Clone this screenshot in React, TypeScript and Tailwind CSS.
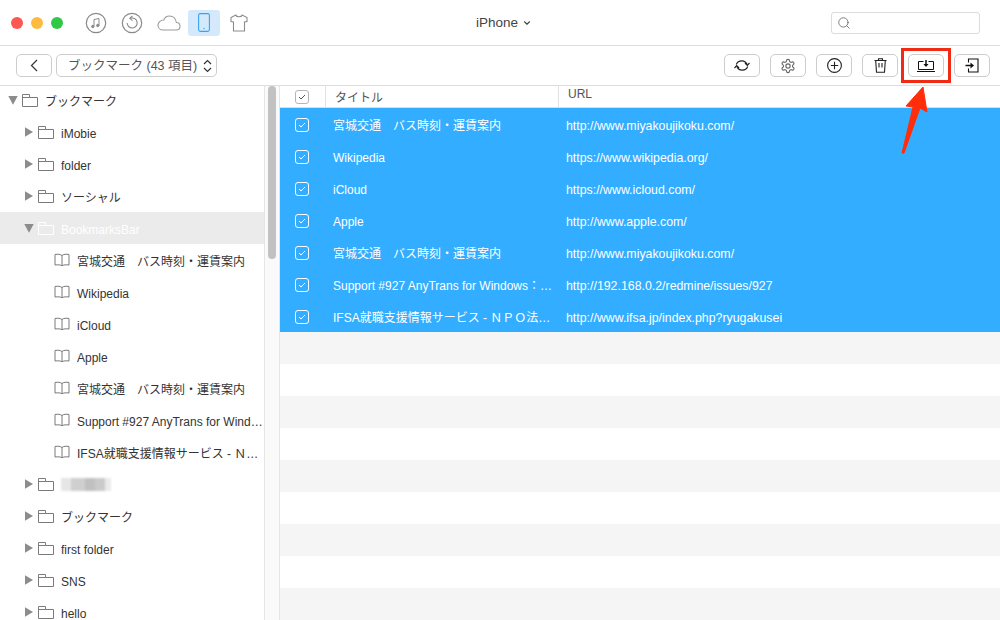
import { ChevronDown, Search } from "lucide-react";

const FONT = "font-['Liberation_Sans','Noto_Sans_CJK_JP',sans-serif]";

type TreeRow = { label?: string; level: 0 | 1 | 2; open?: boolean; selected?: boolean; blurred?: boolean };

const tree: TreeRow[] = [
  { label: "ブックマーク", level: 0, open: true },
  { label: "iMobie", level: 1 },
  { label: "folder", level: 1 },
  { label: "ソーシャル", level: 1 },
  { label: "BookmarksBar", level: 1, open: true, selected: true },
  { label: "宮城交通　バス時刻・運賃案内", level: 2 },
  { label: "Wikipedia", level: 2 },
  { label: "iCloud", level: 2 },
  { label: "Apple", level: 2 },
  { label: "宮城交通　バス時刻・運賃案内", level: 2 },
  { label: "Support #927 AnyTrans for Wind…", level: 2 },
  { label: "IFSA就職支援情報サービス - Ｎ…", level: 2 },
  { level: 1, blurred: true },
  { label: "ブックマーク", level: 1 },
  { label: "first folder", level: 1 },
  { label: "SNS", level: 1 },
  { label: "hello", level: 1 },
];

const rows = [
  ["宮城交通　バス時刻・運賃案内", "http://www.miyakoujikoku.com/"],
  ["Wikipedia", "https://www.wikipedia.org/"],
  ["iCloud", "https://www.icloud.com/"],
  ["Apple", "http://www.apple.com/"],
  ["宮城交通　バス時刻・運賃案内", "http://www.miyakoujikoku.com/"],
  ["Support #927 AnyTrans for Windows：…", "http://192.168.0.2/redmine/issues/927"],
  ["IFSA就職支援情報サービス - ＮＰＯ法…", "http://www.ifsa.jp/index.php?ryugakusei"],
];

const Folder = ({ white }: { white?: boolean }) => (
  <svg width="16" height="14" viewBox="0 0 16 14" fill="none" stroke={white ? "#ffffff" : "#7a7a7a"} className="shrink-0">
    <path d="M0.5 13.5V1.5H7.5V4.5H15.5V13.5ZM0.5 4.5H7.5" />
  </svg>
);

const Book = () => (
  <svg width="16" height="14" viewBox="0 0 16 14" fill="none" stroke="#7a7a7a" className="shrink-0">
    <path d="M8 2.5C6.5 1.2 3.5 1 1 1.5V12C3.5 11.6 6.5 11.8 8 12.7C9.5 11.8 12.5 11.6 15 12V1.5C12.5 1 9.5 1.2 8 2.5ZM8 2.5V12.7" />
  </svg>
);

const Arrow = ({ open }: { open?: boolean }) => (
  <svg width="10" height="10" viewBox="0 0 10 10" fill="#8c8c8c" className="shrink-0">
    {open ? <path d="M0.3 1H9.7L5 9.8Z" /> : <path d="M1 0.3L9 5L1 9.7Z" />}
  </svg>
);

const Check = ({ tone }: { tone: "white" | "gray" }) => (
  <span
    className={`flex h-[14px] w-[14px] items-center justify-center rounded-[3px] border ${
      tone === "white" ? "border-white" : "border-[#b5b5b5] bg-white"
    }`}
  >
    <svg width="10" height="8" viewBox="0 0 10 8" fill="none" stroke={tone === "white" ? "#ffffff" : "#555555"}>
      <path d="M2 4L4 6L8 2" />
    </svg>
  </span>
);

const ToolButton = ({ children }: { children: React.ReactNode }) => (
  <button className="flex h-[23px] w-[36px] items-center justify-center rounded-[5px] border border-[#cdcdcd] bg-white">
    {children}
  </button>
);

const TreeItem = ({ row }: { row: TreeRow }) => {
  const pad = row.level === 0 ? "pl-[8px]" : row.level === 1 ? "pl-[24px]" : "pl-[54px]";
  return (
    <div className={`flex h-[32px] shrink-0 items-center ${pad} ${row.selected ? "bg-[#ebebeb]" : ""}`}>
      {row.level < 2 && <Arrow open={row.open} />}
      <span className={row.level < 2 ? "ml-[4px]" : ""}>
        {row.level === 2 ? <Book /> : <Folder white={row.selected} />}
      </span>
      {row.blurred ? (
        <div className="ml-[7px] flex h-[13px] w-[50px] blur-[1px]">
          <div className="w-[10px] bg-[#e6e6e6]" />
          <div className="w-[14px] bg-[#cfcfcf]" />
          <div className="w-[10px] bg-[#c0c0c0]" />
          <div className="w-[10px] bg-[#cacaca]" />
          <div className="w-[6px] bg-[#ebebeb]" />
        </div>
      ) : (
        <span
          className={`whitespace-nowrap pt-[4px] text-[12px] ml-[7px] ${
            row.selected ? "text-white" : "text-[#333333]"
          }`}
        >
          {row.label}
        </span>
      )}
    </div>
  );
};

export default function App() {
  return (
    <div className={`relative flex h-[620px] w-[1000px] flex-col overflow-hidden bg-white ${FONT}`}>
      {/* title bar */}
      <header className="relative flex h-[46px] shrink-0 items-center border-b border-[#dedede] pl-[11px]">
        <div className="flex gap-[8px]">
          <span className="h-[12px] w-[12px] rounded-full bg-[#fc5753]" />
          <span className="h-[12px] w-[12px] rounded-full bg-[#fdbc40]" />
          <span className="h-[12px] w-[12px] rounded-full bg-[#33c748]" />
        </div>
        <div className="ml-[22px] flex items-center">
          <svg width="22" height="22" viewBox="0 0 22 22" fill="none" stroke="#8b8b8b" className="mr-[14px]">
            <circle cx="11" cy="11" r="9.7" strokeWidth="1.2" />
            <path d="M9 14.5V7.5L14 6.5V13.5" strokeWidth="1" />
            <circle cx="7.8" cy="14.5" r="1.2" fill="#8b8b8b" />
            <circle cx="12.8" cy="13.5" r="1.2" fill="#8b8b8b" />
          </svg>
          <svg width="22" height="22" viewBox="0 0 22 22" fill="none" stroke="#8b8b8b" className="mr-[14px]">
            <circle cx="11" cy="11" r="9.7" strokeWidth="1.2" />
            <path d="M9.5 6.3A5 5 0 1 1 6.2 11" strokeWidth="1.1" />
            <path d="M11.5 4L8.8 6.3L11.5 8.6" strokeWidth="1.1" />
          </svg>
          <svg width="24" height="16" viewBox="0 0 24 16" fill="none" stroke="#9a9a9a" strokeWidth="1.1" className="mr-[7px]">
            <path d="M6 15H19C21.5 15 23 13.2 23 11.2C23 9 21.3 7.5 19.4 7.5C18.8 3.5 15.8 1 12.6 1C9.8 1 7.6 2.6 6.8 5C3.5 5 1 7.5 1 10.2C1 12.9 3.2 15 6 15Z" />
          </svg>
          <div className="flex h-[26px] w-[32px] items-center justify-center rounded-[3px] bg-[#d4e9fb]">
            <svg width="12" height="19" viewBox="0 0 12 19" fill="none" stroke="#3aa4ef" strokeWidth="1.1">
              <rect x="0.6" y="0.6" width="10.8" height="17.8" rx="1.8" />
              <circle cx="6" cy="15.5" r="0.7" fill="#3aa4ef" stroke="none" />
            </svg>
          </div>
          <svg width="18" height="18" viewBox="0 0 18 18" fill="none" stroke="#8b8b8b" strokeWidth="1.1" className="ml-[10px]">
            <path d="M5.8 1L1 3.5V7.5L3.5 8V17H14.5V8L17 7.5V3.5L12.2 1C11.6 3.4 6.4 3.4 5.8 1Z" />
          </svg>
        </div>
        <div className="absolute left-[476px] top-[13px] flex items-center gap-[4px] text-[13.5px] text-[#444444]">
          iPhone
          <ChevronDown size={10} strokeWidth={2.6} className="text-[#444444]" />
        </div>
        <div className="absolute left-[831px] top-[12px] flex h-[22px] w-[149px] items-center rounded-[3px] border border-[#dcdcdc] pl-[5px]">
          <Search size={14} strokeWidth={1.4} className="text-[#666666]" />
        </div>
      </header>

      {/* toolbar */}
      <div className="flex h-[40px] shrink-0 items-center justify-between border-b border-[#dedede] pl-[16px] pr-[10px]">
        <div className="flex items-center gap-[4px]">
          <ToolButton>
            <svg width="8" height="13" viewBox="0 0 8 13" fill="none" stroke="#333333" strokeWidth="1.2">
              <path d="M7 1L1.5 6.5L7 12" />
            </svg>
          </ToolButton>
          <div className="flex h-[23px] w-[161px] items-center justify-between rounded-[5px] border border-[#cdcdcd] pl-[11px] pr-[4px] text-[12.5px] text-[#555555]">
            <span className="pt-[2px]">ブックマーク (43 項目)</span>
            <svg width="9" height="14" viewBox="0 0 9 14" fill="none" stroke="#333333" strokeWidth="1.2">
              <path d="M1 5L4.5 1.5L8 5M1 9L4.5 12.5L8 9" />
            </svg>
          </div>
        </div>
        <div className="flex items-center gap-[10px]">
          <ToolButton>
            <svg width="16" height="15" viewBox="0 0 16 15" fill="none" stroke="#222222" strokeWidth="1.2">
              <path d="M2.3 6.5A5.8 5.8 0 0 1 13.2 6.8M13.7 8.5A5.8 5.8 0 0 1 2.8 8.2" />
              <path d="M11 5L13.3 7.3L15.5 5M0.5 10L2.7 7.7L5 10" />
            </svg>
          </ToolButton>
          <ToolButton>
            <svg width="16" height="16" viewBox="0 0 24 24" fill="none" stroke="#666666" strokeWidth="1.7">
              <path d="M12.2 2h-.4a2 2 0 0 0-2 2v.2a2 2 0 0 1-1 1.7l-.4.3a2 2 0 0 1-2 0l-.2-.1a2 2 0 0 0-2.7.7l-.2.4a2 2 0 0 0 .7 2.7l.2.1a2 2 0 0 1 1 1.7v.6a2 2 0 0 1-1 1.7l-.2.1a2 2 0 0 0-.7 2.7l.2.4a2 2 0 0 0 2.7.7l.2-.1a2 2 0 0 1 2 0l.4.3a2 2 0 0 1 1 1.7v.2a2 2 0 0 0 2 2h.4a2 2 0 0 0 2-2v-.2a2 2 0 0 1 1-1.7l.4-.3a2 2 0 0 1 2 0l.2.1a2 2 0 0 0 2.7-.7l.2-.4a2 2 0 0 0-.7-2.7l-.2-.1a2 2 0 0 1-1-1.7v-.6a2 2 0 0 1 1-1.7l.2-.1a2 2 0 0 0 .7-2.7l-.2-.4a2 2 0 0 0-2.7-.7l-.2.1a2 2 0 0 1-2 0l-.4-.3a2 2 0 0 1-1-1.7V4a2 2 0 0 0-2-2Z" />
              <circle cx="12" cy="12" r="3.2" />
            </svg>
          </ToolButton>
          <ToolButton>
            <svg width="15" height="15" viewBox="0 0 15 15" fill="none" stroke="#222222" strokeWidth="1.1">
              <circle cx="7.5" cy="7.5" r="6.9" />
              <path d="M7.5 3.8V11.2M3.8 7.5H11.2" />
            </svg>
          </ToolButton>
          <ToolButton>
            <svg width="13" height="15" viewBox="0 0 13 15" fill="none" stroke="#222222" strokeWidth="1.1">
              <path d="M0.5 2.5H12.5M4.5 2.5V0.8H8.5V2.5M1.7 2.5L2.5 14.2H10.5L11.3 2.5M5 5V9.5M8 5V9.5" />
            </svg>
          </ToolButton>
          <ToolButton>
            <svg width="18" height="12" viewBox="0 0 18 12" fill="none" stroke="#111111" strokeWidth="1">
              <path d="M6.5 1.5H1.5V9.5H16.5V1.5H11.5M0 11.5H18" />
              <path d="M9 0V6" strokeWidth="1.5" />
              <path d="M6.5 4H11.5L9 7Z" fill="#111111" stroke="none" />
            </svg>
          </ToolButton>
          <ToolButton>
            <svg width="14" height="15" viewBox="0 0 14 15" fill="none" stroke="#111111" strokeWidth="1.1">
              <path d="M3.5 4.5V1H13V14H3.5V10.5" />
              <path d="M0.5 7.5H6" strokeWidth="1.5" />
              <path d="M5.5 4.5L9 7.5L5.5 10.5Z" fill="#111111" stroke="none" />
            </svg>
          </ToolButton>
        </div>
      </div>

      <div className="flex min-h-0 flex-1">
        {/* sidebar */}
        <aside className="flex w-[264px] shrink-0 flex-col overflow-hidden">
          <div className="-mt-[2px] flex flex-col">
            {tree.map((row, i) => (
              <TreeItem key={i} row={row} />
            ))}
          </div>
        </aside>
        <div className="w-[16px] shrink-0 border-x border-[#e6e6e6] bg-[#fafafa] pl-[3px]">
          <div className="h-[173px] w-[8px] rounded-full bg-[#c2c2c2]" />
        </div>

        {/* table */}
        <main className="flex min-w-0 flex-1 flex-col">
          <div className="flex h-[22px] shrink-0 border-b border-[#dedede] text-[12px] text-[#555555]">
            <div className="flex w-[46px] items-center border-r border-[#e2e2e2] pl-[15px]">
              <Check tone="gray" />
            </div>
            <div className="flex w-[233px] items-center border-r border-[#e2e2e2] pl-[9px] pt-[3px]">タイトル</div>
            <div className="pl-[9px] pt-[1px] leading-[15px]">URL</div>
          </div>
          {rows.map((row, i) => (
            <div key={i} className="flex h-[32px] shrink-0 items-center bg-[#33adff] text-[12px] text-white">
              <div className="flex w-[53px] shrink-0 pl-[15px] pt-[2px]">
                <Check tone="white" />
              </div>
              <div className="w-[222px] shrink-0 whitespace-nowrap pt-[4px]">{row[0]}</div>
              <div className="ml-[11px] whitespace-nowrap pt-[4px] text-[12.35px]">{row[1]}</div>
            </div>
          ))}
          {[0, 1, 2, 3, 4, 5, 6, 7, 8].map((i) => (
            <div key={i} className={`h-[32px] shrink-0 ${i % 2 === 0 ? "bg-[#f5f5f5]" : "bg-white"}`} />
          ))}
        </main>
      </div>

      {/* callout drawn over the toolbar */}
      <div className="absolute left-[901px] top-[48px] h-[35px] w-[50px] border-[3px] border-[#f12a14]" />
      <svg className="absolute left-[898px] top-[84px]" width="34" height="72" viewBox="0 0 34 72">
        <path d="M25 3L8 22L15 23L4 69L6 69L22 24L29 28Z" fill="#ff2d0a" stroke="#ff2d0a" strokeLinejoin="round" />
      </svg>
    </div>
  );
}
